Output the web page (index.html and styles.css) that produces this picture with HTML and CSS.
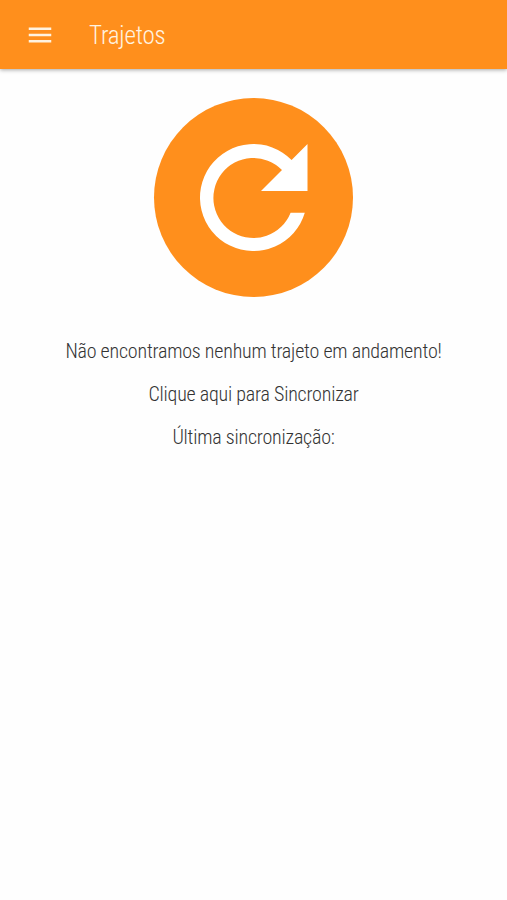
FILE: index.html
```html
<!DOCTYPE html>
<html lang="pt-BR">

    <head>
        <meta charset="UTF-8">
        <meta name="viewport" content="width=device-width, initial-scale=1.0">
        <title>Trajetos</title>
        <link rel="stylesheet" href="styles.css">
    </head>

    <body>
        <header class="toolbar">
            <button class="menu-button" aria-label="Menu">
                <svg viewBox="0 0 24 24">
                    <path d="M3 18h18v-2H3v2zm0-5h18v-2H3v2zm0-7v2h18V6H3z" />
                </svg>
            </button>
            <h1>Trajetos</h1>
        </header>

        <main class="content">
            <button class="sync-button" aria-label="Sincronizar">
                <svg viewBox="0 0 199 199">
                    <path d="M153.5 46v47H107l21-21A40 40 0 1 0 136.6 114.7H150.8A53.5 53.5 0 1 1 137.6 62z" />
                </svg>
            </button>
            <p>Não encontramos nenhum trajeto em andamento!</p>
            <p>Clique aqui para Sincronizar</p>
            <p>Última sincronização:</p>
        </main>
    </body>

</html>
```

FILE: styles.css
```css
body {
    margin: 0;
    min-height: 100vh;
    background: #fefefe;
    color: #333;
    font-family: 'Roboto Condensed', Roboto, sans-serif;
    font-stretch: condensed;
    font-weight: 300;
    letter-spacing: -0.21px;
}

button {
    padding: 0;
    border: none;
    background: none;
    cursor: pointer;
}

.toolbar {
    display: flex;
    align-items: center;
    height: 69px;
    padding: 0 25px;
    box-sizing: border-box;
    background: #ff8f1c;
    color: #fff3e0;
    box-shadow: 0 1px 4px rgba(0, 0, 0, 0.35);
}

.menu-button {
    width: 30px;
    height: 30px;
    margin-right: 34px;
}

.menu-button svg {
    display: block;
    fill: #fff3e0;
}

.toolbar h1 {
    margin: 0;
    padding-top: 2px;
    font-size: 25px;
    font-weight: 300;
}

.content {
    display: flex;
    flex-direction: column;
    align-items: center;
    padding-top: 29px;
}

.sync-button {
    width: 199px;
    height: 199px;
    margin-bottom: 41px;
    border-radius: 50%;
    background: #ff8f1c;
}

.sync-button svg {
    display: block;
    fill: white;
}

.content p {
    margin: 0 0 17px;
    font-size: 20px;
    line-height: 26px;
    white-space: nowrap;
}
```
